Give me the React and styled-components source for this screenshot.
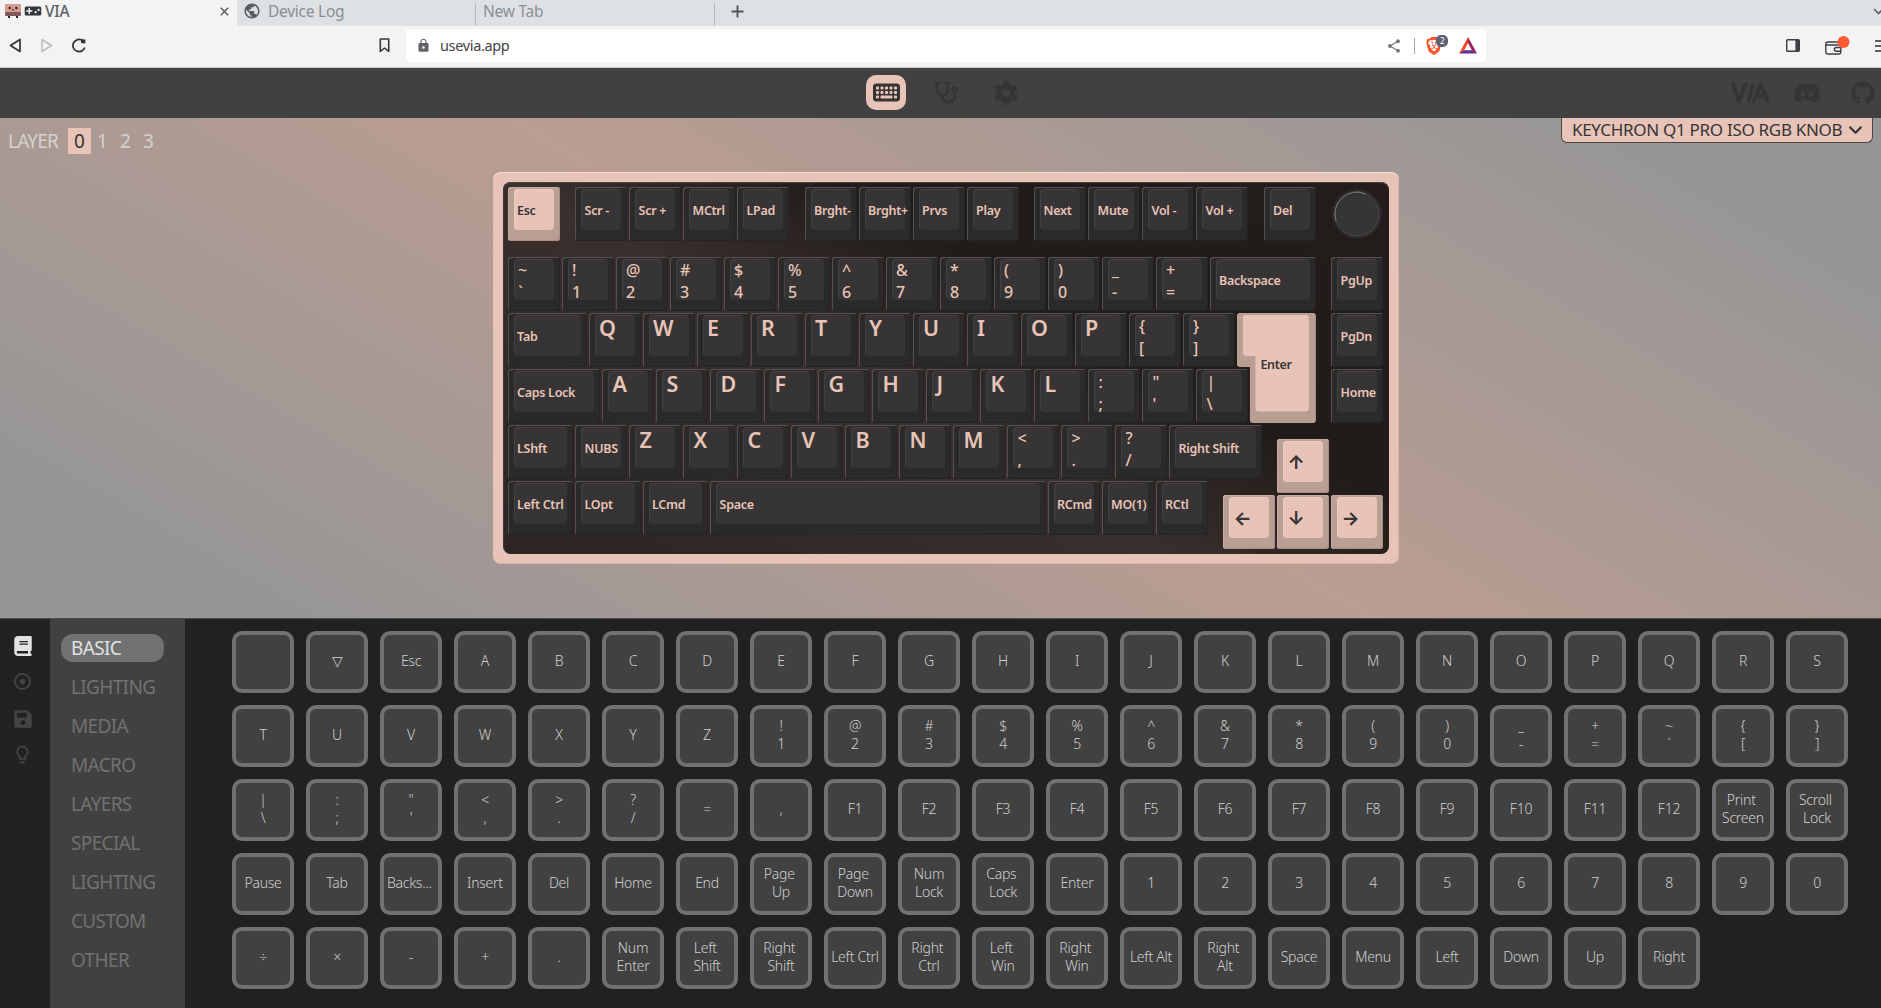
import React from 'react';
import styled, { createGlobalStyle, css } from 'styled-components';
import { FaKeyboard, FaStethoscope, FaGear, FaDiscord, FaGithub, FaAngleDown, FaBook } from 'react-icons/fa6';
import { FaSave } from 'react-icons/fa';
import { MdShare, MdPublic, MdLock, MdLightbulbOutline, MdVideogameAsset } from 'react-icons/md';
import { SiBrave } from 'react-icons/si';

const color = {
  accent: '#e8c4b8',
  accentDark: '#b99e93',
  ink: '#363434',
  control: '#414141',
  panel: '#212121',
};

const GlobalStyle = createGlobalStyle`
  * { box-sizing: border-box; }
  html, body { margin: 0; height: 100%; overflow: hidden; }
  body { font-family: 'Noto Sans', 'Open Sans', sans-serif; background: ${color.panel}; }
  svg { display: block; flex: none; }
`;

const Page = styled.div`
  display: flex;
  flex-direction: column;
  width: 1881px;
  height: 1008px;
  overflow: hidden;
`;

/* ---------- browser chrome ---------- */

const TabStrip = styled.div`
  display: flex;
  height: 26px;
  background: #dde1e4;
`;

const Tab = styled.div`
  display: flex;
  align-items: center;
  width: ${(p) => p.$width}px;
  padding: 0 ${(p) => (p.$active ? 8 : 0)}px 4px ${(p) => p.$pad}px;
  gap: ${(p) => p.$gap || 0}px;
  font-size: 15.5px;
  letter-spacing: -0.25px;
  line-height: 20px;
  color: ${(p) => (p.$active ? '#5f6163' : '#8b8f92')};
  font-weight: ${(p) => (p.$active ? 500 : 400)};
  background: ${(p) => (p.$active ? '#f3f3f3' : 'transparent')};
  white-space: nowrap;
`;

const TabSeparator = styled.div`
  width: 1px;
  height: 23px;
  margin-top: 3px;
  background: #b5b9bc;
`;

const CloseIcon = styled.svg`
  margin-left: auto;
`;

const NewTab = styled.div`
  display: flex;
  flex: 1;
  align-items: center;
  justify-content: space-between;
  padding: 0 0 4px 16px;
`;

const Toolbar = styled.div`
  display: flex;
  align-items: center;
  height: 42px;
  padding: 0 0 2px 9px;
  background: #f3f3f3;
  border-bottom: 1px solid #c9cacb;
`;

const NavButtons = styled.div`
  display: flex;
  flex: none;
  align-items: center;
  gap: 18px;
  width: 370px;
`;

const AddressBar = styled.div`
  display: flex;
  flex: none;
  align-items: center;
  width: 1080px;
  height: 33px;
  margin-left: 16px;
  padding: 0 9px 0 10px;
  border-radius: 4px;
  background: #fff;
  color: #3f4246;
  font-size: 14.5px;
  letter-spacing: -0.35px;
`;

const Url = styled.span`
  margin-left: 9px;
  padding-bottom: 1px;
  flex: 1;
`;

const BarDivider = styled.div`
  width: 1px;
  height: 16px;
  margin: 0 11px 0 12px;
  background: #a9abad;
`;

const Shield = styled.div`
  position: relative;
  width: 16px;
  margin-right: 17px;
`;

const BraveIcon = styled(SiBrave)`
  margin-left: -1px;
`;

const CountBadge = styled.span`
  position: absolute;
  left: 10px;
  top: -2px;
  width: 12px;
  height: 12px;
  border-radius: 5px;
  background: #5f6272;
  color: #fff;
  font-size: 8px;
  line-height: 11px;
  text-align: center;
`;

const BrowserActions = styled.div`
  display: flex;
  align-items: center;
  gap: 25px;
  margin-left: 300px;
`;

/* ---------- application header ---------- */

const Header = styled.header`
  display: flex;
  align-items: center;
  justify-content: space-between;
  height: 50px;
  background: ${color.control};
  color: ${color.ink};
`;

const HeaderSide = styled.div`
  display: flex;
  align-items: center;
  width: 150px;
  padding-right: 6px;
`;

const SocialLinks = styled(HeaderSide)`
  gap: 22px;

  & > :last-child {
    margin-left: auto;
  }
`;

const HeaderNav = styled.nav`
  display: flex;
  align-items: center;
  gap: 20px;
  padding: 0 0 1px 11px;
`;

const HeaderButton = styled.div`
  display: flex;
  align-items: center;
  justify-content: center;
  width: 40px;
  height: 35px;
  border-radius: 10px;
  background: ${(p) => (p.$active ? color.accent : 'transparent')};
`;

/* ---------- keyboard canvas ---------- */

const Canvas = styled.section`
  position: relative;
  display: flex;
  justify-content: center;
  align-items: flex-start;
  height: 500px;
  padding: 54px 0 0 10px;
  background: linear-gradient(30deg, #969696 10%, #bb9d92 50%, #969696 90%);
`;

const LayerPicker = styled.div`
  position: absolute;
  left: 8px;
  top: 10px;
  display: flex;
  align-items: center;
  color: #d6d1cf;
  font-size: 19px;
  letter-spacing: -0.8px;
`;

const LayerLabel = styled.span`
  width: 60px;
  height: 26px;
  line-height: 27px;
`;

const LayerNumber = styled.span`
  width: 23px;
  height: 26px;
  line-height: 27px;
  text-align: center;
  letter-spacing: 0;
  ${(p) => p.$active && css`background: ${color.accent}; color: ${color.ink};`}
`;

const BoardSelect = styled.div`
  position: absolute;
  right: 8px;
  top: 0;
  display: flex;
  align-items: center;
  gap: 5px;
  width: 312px;
  height: 25px;
  padding: 0 9px 2px 10px;
  border: 1px solid #4a4645;
  border-top: 0;
  border-radius: 0 0 6px 6px;
  background: ${color.accent};
  color: ${color.ink};
  font-size: 17px;
  letter-spacing: -0.3px;
  white-space: nowrap;
`;

const Case = styled.div`
  width: 906px;
  height: 392px;
  padding: 10px;
  border-radius: 8px;
  background: ${color.accent};
  box-shadow: inset 0 1px 0 #f3dcd4, inset -1px -1px 0 #dbb5a8;
`;

const Plate = styled.div`
  display: grid;
  grid-template-columns: repeat(65, 13.5px);
  grid-template-rows: repeat(26, 14px);
  height: 372px;
  padding: 5px 0 0 5.4px;
  border-radius: 8px;
  background: linear-gradient(30deg, #2d2423 0%, #3a2f2c 43%, #211c19 64%, #231c1a 100%);
  box-shadow: inset 0 1px 1px #4b4644, inset 1px 0 1px #3e3a38;
`;

const KeyBase = styled.div`
  grid-column: ${(p) => p.$x * 4 + 1} / span ${(p) => p.$w * 4};
  grid-row: ${(p) => p.$y + 1} / span 4;
  display: flex;
  margin: 0 2px 2px 0;
  padding: 2px 6px 11px 6px;
  border-radius: 3px;
  background: ${(p) => (p.$accent ? color.accentDark : '#2a2a2a')};
  box-shadow: ${(p) =>
    p.$accent
      ? 'inset 1px 1px 0 #c9ada3, inset -1px -1px 0 #a88d83'
      : 'inset 1px 1px 0 #565150, inset -1px -1px 0 #232323'};
`;

const faceText = {
  label: css`font-size: 12.5px; letter-spacing: -0.3px; line-height: 43px;`,
  letter: css`font-size: 21.5px; line-height: 25px; padding-left: 4px;`,
  double: css`font-size: 16px; line-height: 22px; padding-left: 4px; font-weight: 500;`,
  arrow: css`
    font-family: Inter, 'DejaVu Sans', sans-serif;
    font-size: 19px;
    line-height: 44px;
    font-weight: 700;
    padding-left: 4px;
  `,
};

const KeyFace = styled.div`
  flex: 1;
  min-width: 0;
  height: 41px;
  display: flex;
  flex-direction: column;
  justify-content: flex-start;
  padding-left: 3.2px;
  border-radius: 4px;
  background: ${(p) => (p.$accent ? color.accent : color.ink)};
  box-shadow: ${(p) => (p.$accent ? 'inset 1px 1px 0 #edcdc2' : 'inset 1px 1px 0 #434141')};
  color: ${(p) => (p.$accent ? color.ink : color.accent)};
  font-weight: 600;
  white-space: nowrap;
  ${(p) => faceText[p.$kind]}
`;

const EnterKey = styled.div`
  grid-column: 55 / span 6;
  grid-row: 10 / span 8;
  width: 79px;
  height: 110px;
  background: ${color.accentDark};
  clip-path: path('M3 0H76Q79 0 79 3V107Q79 110 76 110H16Q13 110 13 107V54H3Q0 54 0 51V3Q0 0 3 0Z');
`;

const EnterFace = styled.div`
  width: 79px;
  height: 110px;
  padding-left: 23.5px;
  background: ${color.accent};
  color: ${color.ink};
  clip-path: path('M9 2H69Q72 2 72 5V95Q72 98.5 68 98.5H22Q18.5 98.5 18.5 95V43H9Q6 43 6 40V5Q6 2 9 2Z');
  font-size: 12.5px;
  font-weight: 600;
  letter-spacing: -0.3px;
  line-height: 103px;
`;

const Knob = styled.svg`
  grid-column: 62 / span 4;
  grid-row: 1 / span 4;
  margin-top: 1px;
`;

/* ---------- keycode panel ---------- */

const Panel = styled.section`
  display: flex;
  height: 390px;
  border-top: 1px solid #4b4b4b;
  background: ${color.panel};
`;

const IconRail = styled.nav`
  display: flex;
  flex-direction: column;
  align-items: center;
  width: 50px;
  padding: 17px 5px 0 0;
  background: #222;
  color: #444;
`;

const RailIcon = styled.div`
  display: flex;
  align-items: center;
  justify-content: center;
  height: ${(p) => p.$h}px;
  padding-bottom: ${(p) => (p.$active ? 15 : 0)}px;
  color: ${(p) => (p.$active ? '#e2e2e2' : 'inherit')};
`;

const Menu = styled.ul`
  display: flex;
  flex-direction: column;
  gap: 11px;
  width: 135px;
  margin: 0;
  padding: 15px 21px 0 11px;
  list-style: none;
  background: ${color.control};
`;

const MenuItem = styled.li`
  height: 28px;
  padding-left: 10px;
  border-radius: 12px;
  line-height: 28px;
  font-size: 19px;
  letter-spacing: -0.65px;
  color: ${(p) => (p.$active ? '#e2e2e2' : '#717171')};
  background: ${(p) => (p.$active ? '#717171' : 'transparent')};
`;

const KeycodeGrid = styled.div`
  display: grid;
  grid-template-columns: repeat(22, 62px);
  grid-auto-rows: 62px;
  gap: 12px;
  padding: 12px 0 0 47px;
`;

const Keycode = styled.div`
  display: flex;
  align-items: center;
  justify-content: center;
  padding-bottom: 2px;
  border: 4px solid #717171;
  border-radius: 10px;
  background: ${color.control};
  color: #d0d0d0;
  font-size: 14px;
  font-weight: 300;
  letter-spacing: -0.25px;
  line-height: 18px;
  text-align: center;
  white-space: pre;
`;

/* ---------- data: [label, x, y, width, accent] ---------- */

const keys = [
  ['Esc', 0, 0, 1, true], ['Scr -', 1.25, 0], ['Scr +', 2.25, 0], ['MCtrl', 3.25, 0], ['LPad', 4.25, 0],
  ['Brght-', 5.5, 0], ['Brght+', 6.5, 0], ['Prvs', 7.5, 0], ['Play', 8.5, 0],
  ['Next', 9.75, 0], ['Mute', 10.75, 0], ['Vol -', 11.75, 0], ['Vol +', 12.75, 0], ['Del', 14, 0],
  ...['~`', '!1', '@2', '#3', '$4', '%5', '^6', '&7', '*8', '(9', ')0', '_-', '+='].map((k, i) => [k, i, 5]),
  ['Backspace', 13, 5, 2], ['PgUp', 15.25, 5],
  ['Tab', 0, 9, 1.5],
  ...['Q', 'W', 'E', 'R', 'T', 'Y', 'U', 'I', 'O', 'P', '{[', '}]'].map((k, i) => [k, i + 1.5, 9]),
  ['PgDn', 15.25, 9],
  ['Caps Lock', 0, 13, 1.75],
  ...['A', 'S', 'D', 'F', 'G', 'H', 'J', 'K', 'L', ':;', '"\'', '|\\'].map((k, i) => [k, i + 1.75, 13]),
  ['Home', 15.25, 13],
  ['LShft', 0, 17, 1.25], ['NUBS', 1.25, 17],
  ...['Z', 'X', 'C', 'V', 'B', 'N', 'M', '<,', '>.', '?/'].map((k, i) => [k, i + 2.25, 17]),
  ['Right Shift', 12.25, 17, 1.75],
  ['Left Ctrl', 0, 21, 1.25], ['LOpt', 1.25, 21, 1.25], ['LCmd', 2.5, 21, 1.25], ['Space', 3.75, 21, 6.25],
  ['RCmd', 10, 21], ['MO(1)', 11, 21], ['RCtl', 12, 21],
  ['↑', 14.25, 18, 1, true], ['←', 13.25, 22, 1, true], ['↓', 14.25, 22, 1, true], ['→', 15.25, 22, 1, true],
];

const kindOf = (label) => {
  if ('↑←↓→'.includes(label)) return 'arrow';
  if (label.length === 1) return 'letter';
  return label.length === 2 ? 'double' : 'label';
};

const menu = ['BASIC', 'LIGHTING', 'MEDIA', 'MACRO', 'LAYERS', 'SPECIAL', 'LIGHTING', 'CUSTOM', 'OTHER'];

const keycodes = [
  '', '▽', 'Esc', ...'ABCDEFGHIJKLMNOPQRSTUVWXYZ',
  '!\n1', '@\n2', '#\n3', '$\n4', '%\n5', '^\n6', '&\n7', '*\n8', '(\n9', ')\n0', '_\n-', '+\n=', '~\n`', '{\n[', '}\n]',
  '|\n\\', ':\n;', '"\n\'', '<\n,', '>\n.', '?\n/', '=', ',',
  'F1', 'F2', 'F3', 'F4', 'F5', 'F6', 'F7', 'F8', 'F9', 'F10', 'F11', 'F12', 'Print \nScreen', 'Scroll \nLock',
  'Pause', 'Tab', 'Backs... ', 'Insert', 'Del', 'Home', 'End', 'Page \nUp', 'Page \nDown', 'Num\nLock', 'Caps \nLock', 'Enter',
  ...'1234567890',
  '÷', '×', '-', '+', '.', 'Num\nEnter', 'Left \nShift', 'Right \nShift', 'Left Ctrl', 'Right \nCtrl', 'Left \nWin',
  'Right \nWin', 'Left Alt', 'Right \nAlt', 'Space', 'Menu', 'Left', 'Down', 'Up', 'Right',
];

function BoardKey({ data: [label, x, y, w = 1, accent] }) {
  const kind = kindOf(label);
  return (
    <KeyBase $x={x} $y={y} $w={w} $accent={accent}>
      <KeyFace $kind={kind} $accent={accent}>
        {kind === 'double' ? [...label].map((c) => <span key={c}>{c}</span>) : <span>{label}</span>}
      </KeyFace>
    </KeyBase>
  );
}

function Favicon() {
  return (
    <svg width="16" height="14" viewBox="0 0 16 14">
      <rect x="0" y="0" width="16" height="9" rx="1" fill="#d59c8f" />
      <rect x="0" y="8" width="16" height="4" rx="1" fill="#82585c" />
      <path d="M3 12h2v2H3zM11 12h2v2h-2z" fill="#2c2424" />
      <circle cx="4.7" cy="4" r="1.2" fill="#2c2424" />
      <circle cx="11.3" cy="4" r="1.2" fill="#2c2424" />
      <path d="M7 5.5q1 1 2 0" stroke="#2c2424" fill="none" />
    </svg>
  );
}

function Browser() {
  return (
    <>
      <TabStrip>
        <Tab $width={237} $pad={5} $gap={3} $active>
          <Favicon />
          <MdVideogameAsset size={18} color="#33363a" />
          VIA
          <CloseIcon width="9" height="9" viewBox="0 0 9 9" stroke="#55585b" strokeWidth="1.4">
            <path d="M0.8 0.8L8.2 8.2M8.2 0.8L0.8 8.2" />
          </CloseIcon>
        </Tab>
        <Tab $width={238} $pad={6} $gap={7}>
          <MdPublic size={18} color="#5a5d60" />
          Device Log
        </Tab>
        <TabSeparator />
        <Tab $width={238} $pad={7}>New Tab</Tab>
        <TabSeparator />
        <NewTab>
          <svg width="13" height="13" viewBox="0 0 13 13" stroke="#505356" strokeWidth="1.8">
            <path d="M6.5 0.5V12.5M0.5 6.5H12.5" />
          </svg>
          <svg width="8" height="8" viewBox="0 0 8 8" fill="none" stroke="#5f6265" strokeWidth="1.6">
            <path d="M1 2L5.5 6.5L10 2" />
          </svg>
        </NewTab>
      </TabStrip>
      <Toolbar>
        <NavButtons>
          <svg width="13" height="15" viewBox="0 0 13 15" fill="none" stroke="#2f3236" strokeWidth="1.7" strokeLinejoin="round">
            <path d="M11 1.5V13.5L1.5 7.5Z" />
          </svg>
          <svg width="13" height="15" viewBox="0 0 13 15" fill="none" stroke="#bbbdbf" strokeWidth="1.5" strokeLinejoin="round">
            <path d="M2 1.5V13.5L11.5 7.5Z" />
          </svg>
          <svg width="16" height="15" viewBox="0 0 16 15" fill="none" stroke="#2f3236" strokeWidth="1.7">
            <path d="M11.5 2.5A6.1 6.1 0 1 0 13.8 9.5" />
            <path d="M10 5L10.2 1.2L14.4 1.4V5.4Z" fill="#2f3236" stroke="none" />
          </svg>
        </NavButtons>
        <svg width="11" height="15" viewBox="0 0 11 15" fill="none" stroke="#33363a" strokeWidth="1.6" strokeLinejoin="round">
          <path d="M1.3 1H9.7V13.5L5.5 10L1.3 13.5Z" />
        </svg>
        <AddressBar>
          <MdLock size={15} color="#5f6368" />
          <Url>usevia.app</Url>
          <MdShare size={16} color="#77797c" />
          <BarDivider />
          <Shield>
            <BraveIcon size={18} color="#fb542b" />
            <CountBadge>2</CountBadge>
          </Shield>
          <svg width="18" height="17" viewBox="0 0 18 17">
            <path d="M9 0L0 16.5L5 13.5L9 6Z" fill="#ff4724" />
            <path d="M9 0L18 16.5L13 13.5L9 6Z" fill="#9e1f63" />
            <path d="M0 16.5L5 13.2H13L18 16.5Z" fill="#662d91" />
          </svg>
        </AddressBar>
        <BrowserActions>
          <svg width="14" height="13" viewBox="0 0 14 13">
            <rect x="0.7" y="0.7" width="12.6" height="11.6" rx="1" fill="none" stroke="#3b3e42" strokeWidth="1.4" />
            <rect x="9.4" y="1" width="4" height="11" fill="#3b3e42" />
          </svg>
          <svg width="25" height="20" viewBox="0 0 25 20" fill="none" stroke="#3b3e42" strokeWidth="1.4">
            <rect x="0.8" y="6" width="15" height="12" rx="2" />
            <path d="M1 9H15.5M16 11.5H11.5Q9.3 11.5 9.3 13.3T11.5 15.2H16" />
            <circle cx="18.5" cy="6" r="6" fill="#ff5b33" stroke="none" />
          </svg>
          <svg width="14" height="14" viewBox="0 0 14 14" stroke="#5f6265" strokeWidth="1.8">
            <path d="M0 2H14M0 7H14M0 12H14" />
          </svg>
        </BrowserActions>
      </Toolbar>
    </>
  );
}

function ViaLogo() {
  return (
    <svg width="40" height="22" viewBox="0 0 40 22" fill="none" stroke="currentColor" strokeWidth="4" strokeLinecap="round" strokeLinejoin="round">
      <path d="M2.2 2.5L8 19L14.8 2.5" />
      <path d="M22 2.5L17.5 19.5" strokeWidth="3" />
      <path d="M22.5 19.5L29.5 2.5L37 19.5M27 14.5H34" strokeWidth="3.6" />
    </svg>
  );
}

function AppHeader() {
  return (
    <Header>
      <HeaderSide />
      <HeaderNav>
        <HeaderButton $active><FaKeyboard size={27} /></HeaderButton>
        <HeaderButton><FaStethoscope size={25} /></HeaderButton>
        <HeaderButton><FaGear size={24} /></HeaderButton>
      </HeaderNav>
      <SocialLinks>
        <ViaLogo />
        <FaDiscord size={28} />
        <FaGithub size={24} />
      </SocialLinks>
    </Header>
  );
}

export default function App() {
  return (
    <Page>
      <GlobalStyle />
      <Browser />
      <AppHeader />
      <Canvas>
        <LayerPicker>
          <LayerLabel>LAYER</LayerLabel>
          {[0, 1, 2, 3].map((n) => (
            <LayerNumber key={n} $active={n === 0}>{n}</LayerNumber>
          ))}
        </LayerPicker>
        <BoardSelect>
          KEYCHRON Q1 PRO ISO RGB KNOB
          <FaAngleDown size={17} />
        </BoardSelect>
        <Case>
          <Plate>
            {keys.map((k, i) => <BoardKey key={i} data={k} />)}
            <EnterKey><EnterFace>Enter</EnterFace></EnterKey>
            <Knob width="52" height="52" viewBox="0 0 52 52">
              <circle cx="26" cy="26" r="24" fill="#2a2a2a" />
              <circle cx="26" cy="26" r="24.3" fill="none" stroke="#303030" strokeWidth="1.6" strokeDasharray="1.3 1.1" />
              <circle cx="26" cy="26" r="22" fill="#363434" stroke="#4a4848" strokeWidth="1" />
              <path d="M5 33A22 22 0 0 1 35 6" fill="none" stroke="#7d7b7b" strokeWidth="1" />
            </Knob>
          </Plate>
        </Case>
      </Canvas>
      <Panel>
        <IconRail>
          <RailIcon $h={35} $active><FaBook size={20} /></RailIcon>
          <RailIcon $h={20}>
            <svg width="17" height="17" viewBox="0 0 17 17">
              <circle cx="8.5" cy="8.5" r="7.5" fill="none" stroke="currentColor" strokeWidth="1.8" />
              <circle cx="8.5" cy="8.5" r="2.7" fill="currentColor" />
            </svg>
          </RailIcon>
          <RailIcon $h={55}><FaSave size={20} /></RailIcon>
          <RailIcon $h={17}><MdLightbulbOutline size={21} /></RailIcon>
        </IconRail>
        <Menu>
          {menu.map((m, i) => <MenuItem key={i} $active={i === 0}>{m}</MenuItem>)}
        </Menu>
        <KeycodeGrid>
          {keycodes.map((k, i) => <Keycode key={i}>{k}</Keycode>)}
        </KeycodeGrid>
      </Panel>
    </Page>
  );
}
